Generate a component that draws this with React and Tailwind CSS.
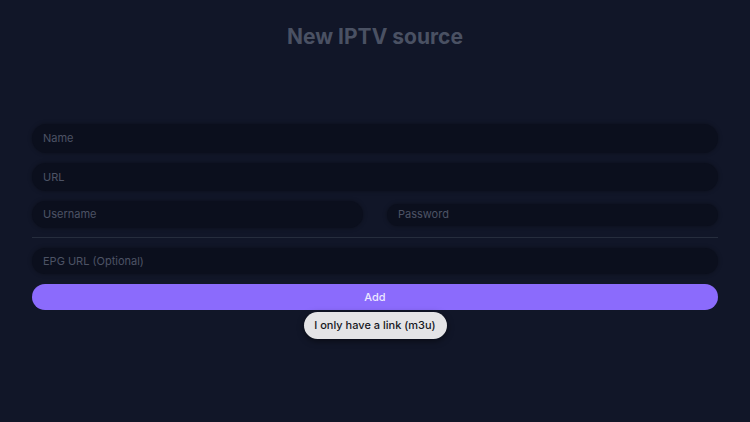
import React from 'react';

const Field = ({ label, className = '' }) => (
  <div
    className={`flex items-center rounded-full bg-[#0b0f1d] px-[11px] text-[11px] text-[#4d5365] shadow-[0_0_4px_rgba(0,0,0,0.35)] ${className}`}
  >
    {label}
  </div>
);

const App = () => {
  return (
    <div
      className="flex h-[422px] w-[750px] flex-col bg-[#111628] px-[32px]"
      style={{ fontFamily: 'Inter, "Noto Sans", sans-serif' }}
    >
      <h1 className="mt-[23px] text-center text-[21px] font-bold leading-[28px] text-[#4a5163]">
        New IPTV source
      </h1>

      <div className="mt-[73px] flex flex-col">
        <Field label="Name" className="h-[29px]" />
        <Field label="URL" className="mt-[10px] h-[28px]" />
        <div className="mt-[10px] flex items-center gap-[24px]">
          <Field label="Username" className="h-[27px] flex-1" />
          <Field label="Password" className="h-[22px] flex-1" />
        </div>
        <div className="mt-[9px] h-px bg-[#262d3d]" />
        <Field label="EPG URL (Optional)" className="mt-[10px] h-[26px]" />
        <button className="mt-[10px] h-[26px] rounded-full bg-[#8b6bfc] text-[11px] font-medium text-[#ece8ff]">
          Add
        </button>
        <div className="mt-[2px] flex justify-center">
          <button className="h-[27px] w-[143px] rounded-full bg-[#e4e4e6] text-[11px] font-medium text-[#15171d] shadow-[0_2px_6px_rgba(0,0,0,0.5)]">
            I only have a link (m3u)
          </button>
        </div>
      </div>
    </div>
  );
};

export default App;
